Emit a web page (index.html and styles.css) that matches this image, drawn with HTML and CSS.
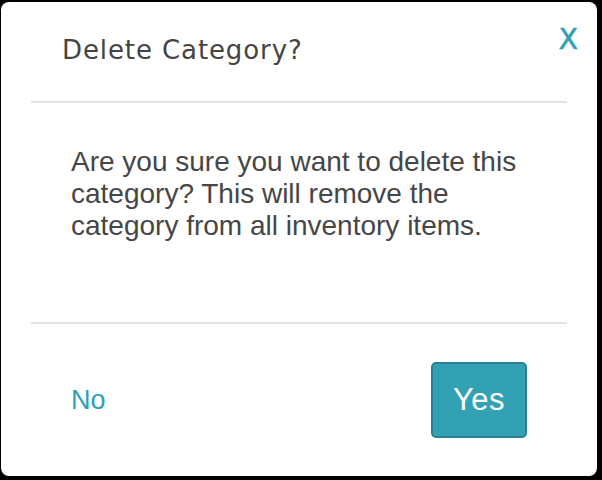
FILE: index.html
```html
<!DOCTYPE html>
<html>
<head>
<meta charset="utf-8">
<link rel="stylesheet" href="styles.css">
</head>
<body>
<div class="dialog">
  <div class="header">
    <h2 class="title">Delete Category?</h2>
    <span class="close">X</span>
  </div>
  <div class="divider"></div>
  <div class="content">
    <p class="message">Are you sure you want to delete this category? This will remove the category from all inventory items.</p>
  </div>
  <div class="divider"></div>
  <div class="footer">
    <span class="no">No</span>
    <button class="yes">Yes</button>
  </div>
</div>
</body>
</html>
```
FILE: styles.css
```css
html, body {
  margin: 0;
  padding: 0;
  background: #000;
}
body {
  padding: 2px 5px 4px 1px;
}
.dialog {
  background: #fff;
  border-radius: 8px;
  height: 474px;
  display: flex;
  flex-direction: column;
}
.header {
  height: 99px;
  display: flex;
  justify-content: space-between;
  align-items: flex-start;
  box-sizing: border-box;
  padding: 0 19px 0 61px;
}
.title {
  margin: 32px 0 0 0;
  font-family: "DejaVu Sans", Lato, sans-serif;
  font-weight: 400;
  font-size: 26px;
  letter-spacing: 0.9px;
  line-height: 32px;
  color: #444;
}
.close {
  margin-top: 22px;
  font-family: "DejaVu Sans", Lato, sans-serif;
  font-size: 28px;
  line-height: 32px;
  color: #2fa0b5;
  -webkit-text-stroke: 0.6px #2fa0b5;
}
.divider {
  height: 2px;
  background: #e3e3e3;
  margin: 0 30px;
}
.content {
  height: 219px;
  box-sizing: border-box;
  padding: 43px 40px 0 70px;
}
.message {
  margin: 0;
  font-family: "Liberation Sans", Arial, sans-serif;
  font-size: 28px;
  line-height: 32px;
  color: #464646;
}
.footer {
  display: flex;
  justify-content: space-between;
  align-items: center;
  padding: 38px 70px 0 70px;
}
.no {
  font-family: "Liberation Sans", Arial, sans-serif;
  font-size: 27px;
  color: #2fa0b5;
}
.yes {
  width: 96px;
  height: 76px;
  background: #33a1b4;
  border: 2px solid #2a8190;
  border-radius: 5px;
  color: #fff;
  font-family: "Liberation Sans", Arial, sans-serif;
  font-size: 31px;
  letter-spacing: 0.5px;
  padding: 0;
}
```
